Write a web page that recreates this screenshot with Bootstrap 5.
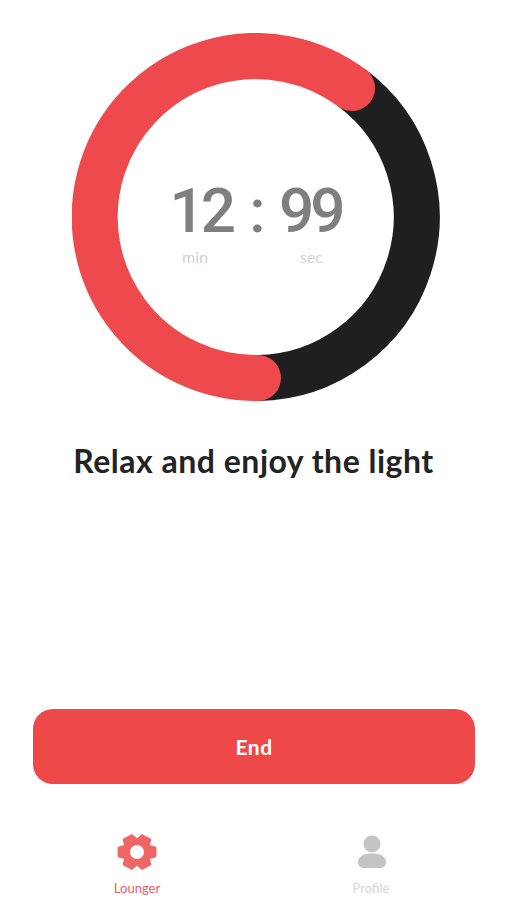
<!DOCTYPE html>
<html lang="en"><head><meta charset="utf-8">
<title>Timer</title>
<link rel="stylesheet" href="https://cdn.jsdelivr.net/npm/bootstrap@5.3.0/dist/css/bootstrap.min.css">
<style>
html,body{height:100%;background:#fff}
body{font-family:"Lato","Liberation Sans",sans-serif;overflow:hidden}
.screen{height:900px;width:507px}
.dial-wrap{width:368px;height:368px;margin:33px 0 0 72px}
.dial-wrap svg{display:block}
.dial-center{inset:0;padding-top:141px}
.clock{font-family:"Roboto",sans-serif;font-size:62px;line-height:74px;color:#7f7f7f;font-weight:500;white-space:nowrap;letter-spacing:-4px;word-spacing:6px;padding-right:1px}
.unit-row{width:141px;margin:0 0 0 110px;font-size:16px;line-height:18px;color:#d3d3d3}
.headline{margin:40px 0 0 0;font-size:32px;line-height:40px;font-weight:700;color:#232325;letter-spacing:.5px}
.end-btn{margin:0 32px 0 33px;height:75px;border-radius:20px;background:#ef4848;border:0;color:#fff;font-size:21px;font-weight:700;letter-spacing:.5px;padding-top:6px}
.end-btn:hover,.end-btn:focus{background:#ef4848;color:#fff}
.tabs{height:116px;padding-top:50px}
.tab-item{font-size:13px;line-height:16px;text-decoration:none}
.tab-a{width:90px;margin-left:92px;color:#e5606b}
.tab-b{width:90px;margin-left:144px;color:#d6d6d6}
.tab-a svg,.tab-b svg{display:block;margin:0 auto 10px}
.tab-b svg{transform:translateX(1px)}
</style></head>
<body>
<main class="screen d-flex flex-column">
  <div class="dial-wrap position-relative flex-shrink-0">
    <svg width="368" height="368" viewBox="72 33 368 368" aria-hidden="true">
      <path d="M352 88A161 161 0 0 1 258 378" fill="none" stroke="#1f1f1f" stroke-width="46"/>
      <path d="M258 378A161 161 0 1 1 352 88" fill="none" stroke="#ee494c" stroke-width="46" stroke-linecap="round"/>
    </svg>
    <div class="dial-center position-absolute text-center">
      <div class="clock">12 : 99</div>
      <div class="unit-row d-flex justify-content-between"><span>min</span><span>sec</span></div>
    </div>
  </div>
  <h1 class="headline text-center">Relax and enjoy the light</h1>
  <div class="flex-grow-1"></div>
  <button type="button" class="btn end-btn">End</button>
  <nav class="tabs d-flex align-items-start">
    <a href="#" class="tab-item tab-a text-center">
      <svg width="40" height="36" viewBox="-20 -18 40 36" aria-hidden="true">
        <g transform="scale(1 .92)"><polygon fill="#f06565" stroke="#f06565" stroke-width="3" stroke-linejoin="round" points="17.95,-4.48 17.95,4.48 11,6.350 12.85,13.31 5.100,17.78 0,12.700 -5.100,17.78 -12.85,13.31 -11,6.350 -17.95,4.48 -17.95,-4.48 -11,-6.350 -12.85,-13.31 -5.100,-17.78 0,-12.700 5.100,-17.78 12.85,-13.31 11,-6.350"/></g>
        <circle r="7" fill="#fff"/>
      </svg>
      Lounger
    </a>
    <a href="#" class="tab-item tab-b text-center">
      <svg width="28" height="36" viewBox="0 0 28 36" aria-hidden="true"><circle cx="14" cy="10" r="8.500" fill="#c4c4c4"/><path fill="#c4c4c4" d="M0 28c0-6 6-8.500 14-8.500s14 2.500 14 8.500c0 3.500-2 6-6 6H6c-4 0-6-2.500-6-6z"/></svg>
      Profile
    </a>
  </nav>
</main>
<script src="https://cdn.jsdelivr.net/npm/bootstrap@5.3.0/dist/js/bootstrap.bundle.min.js"></script>
</body></html>
